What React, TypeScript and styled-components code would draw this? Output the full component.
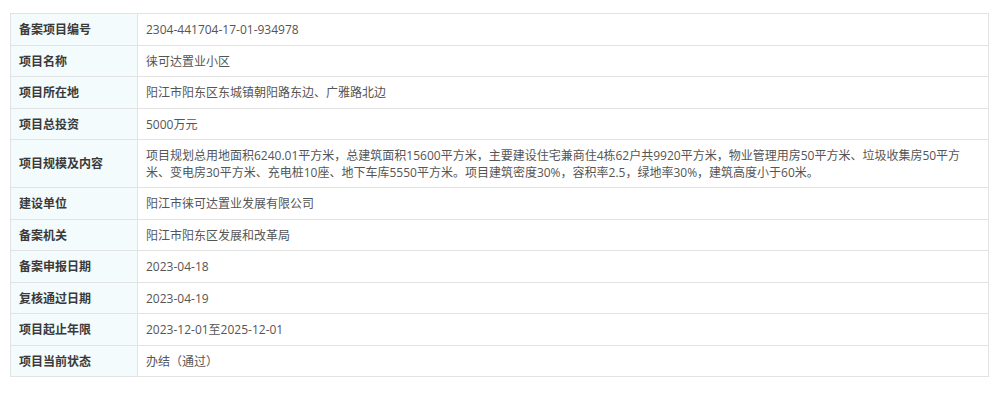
import styled, { createGlobalStyle } from 'styled-components';

const GlobalStyle = createGlobalStyle`
    html, body {
        margin: 0;
        padding: 0;
        background: #ffffff;
    }
    body {
        font-family: "Microsoft YaHei", "Open Sans", "Noto Sans CJK SC", sans-serif;
        font-size: 12px;
    }
`;

const Page = styled.div`
    padding: 13px 11px 0 10px;
`;

const Table = styled.table`
    width: 100%;
    border-collapse: collapse;
    border: 1px solid #dedede;
`;

const LabelCell = styled.th`
    width: 110px;
    padding: 8px 8px 6px;
    line-height: 16.5px;
    text-align: left;
    vertical-align: middle;
    font-weight: bold;
    color: #3a3a3a;
    background: #f3fbfd;
    border: 1px solid #e3e3e3;
`;

const ValueCell = styled.td`
    padding: 8px 10px 6px 8px;
    line-height: 16.5px;
    color: #555555;
    background: #ffffff;
    border: 1px solid #e3e3e3;
`;

type Row = {
    readonly label: string
    readonly value: string
}

const rows: readonly Row[] = [
    { label: '备案项目编号', value: '2304-441704-17-01-934978' },
    { label: '项目名称', value: '徕可达置业小区' },
    { label: '项目所在地', value: '阳江市阳东区东城镇朝阳路东边、广雅路北边' },
    { label: '项目总投资', value: '5000万元' },
    {
        label: '项目规模及内容',
        value: '项目规划总用地面积6240.01平方米，总建筑面积15600平方米，主要建设住宅兼商住4栋62户共9920平方米，物业管理用房50平方米、垃圾收集房50平方米、变电房30平方米、充电桩10座、地下车库5550平方米。项目建筑密度30%，容积率2.5，绿地率30%，建筑高度小于60米。',
    },
    { label: '建设单位', value: '阳江市徕可达置业发展有限公司' },
    { label: '备案机关', value: '阳江市阳东区发展和改革局' },
    { label: '备案申报日期', value: '2023-04-18' },
    { label: '复核通过日期', value: '2023-04-19' },
    { label: '项目起止年限', value: '2023-12-01至2025-12-01' },
    { label: '项目当前状态', value: '办结（通过）' },
];

export default function App() {
    return (
        <>
            <GlobalStyle />
            <Page>
                <Table>
                    <tbody>
                        {rows.map(row => (
                            <tr key={row.label}>
                                <LabelCell>{row.label}</LabelCell>
                                <ValueCell>{row.value}</ValueCell>
                            </tr>
                        ))}
                    </tbody>
                </Table>
            </Page>
        </>
    );
}
